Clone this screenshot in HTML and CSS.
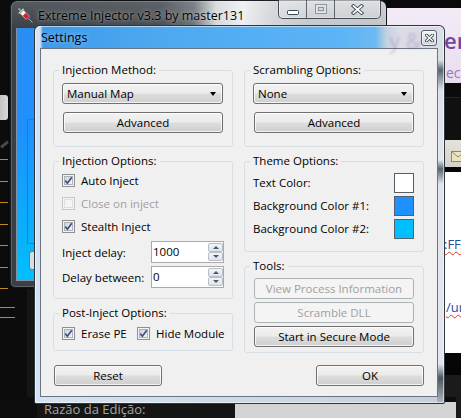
FILE: index.html
```html
<!DOCTYPE html>
<html>
<head>
<meta charset="utf-8">
<title>Extreme Injector - Settings</title>
<link rel="stylesheet" href="styles.css">
</head>
<body>
<div class="desktop">

  <div class="left-deco">
    <div class="l-box"></div>
    <div class="l-pencil"></div>
    <div class="l-lines">
      <i></i><i></i><i></i><i></i><i></i><i></i><i></i>
    </div>
    <div class="l-lines2"><i></i><i></i></div>
    <div class="l-col"></div>
  </div>

  <div class="web">
    <div class="w-top"></div>
    <div class="w-head">
      <div class="h1">er</div>
      <div class="h2">ect</div>
    </div>
    <div class="w-dark"></div>
    <div class="w-bar">
      <svg class="env" width="12" height="11" viewBox="0 0 12 11"><rect x="0.5" y="0.5" width="14" height="10" fill="#e9e5c4" stroke="#8f8a62"/><path d="M0.5 0.5 L7 6 L14 0.5" fill="none" stroke="#8f8a62"/></svg>
    </div>
    <div class="w-sep"></div>
    <div class="w-white">
      <div class="w-line l1">:FF(</div>
      <div class="w-line l2">/ur</div>
    </div>
    <div class="w-black"></div>
    <div class="w-grey"></div>
  </div>

  <div class="bottom-strip">
    <div class="bs-left"></div>
    <div class="bs-panel">Razão da Edição:</div>
    <div class="bs-light"></div>
    <div class="bs-right"></div>
  </div>

  <div class="mainwin">
    <div class="mw-title">
      <svg class="mw-icon" width="17" height="17" viewBox="0 0 17 17">
        <g transform="rotate(-45 8.5 8.5)">
          <rect x="7.6" y="-1.5" width="1.8" height="3.5" fill="#9a9a9a"/>
          <rect x="5" y="1.6" width="7" height="1.6" rx="0.5" fill="#d8d8d8" stroke="#6a6a6a" stroke-width="0.5"/>
          <rect x="6" y="3.2" width="5" height="8.8" fill="#ffffff" stroke="#6b6b6b" stroke-width="0.6"/>
          <rect x="6.4" y="6.8" width="4.2" height="5" fill="#d32222"/>
          <rect x="7.2" y="12" width="2.6" height="2" fill="#3f6fc4"/>
          <line x1="8.5" y1="14" x2="8.5" y2="18.5" stroke="#b9b9b9" stroke-width="0.9"/>
        </g>
      </svg>
      <span class="mw-text">Extreme Injector v3.3 by master131</span>
      <div class="caps">
        <div class="cap cap-min"><svg width="12" height="5" viewBox="0 0 12 5"><rect x="0.5" y="0.5" width="11" height="4" rx="1" fill="#fff" stroke="#3b4550"/></svg></div>
        <div class="cap cap-max"><svg width="12" height="10" viewBox="0 0 12 10"><rect x="0.5" y="0.5" width="11" height="9" fill="none" stroke="#8d959d"/><rect x="1.5" y="1.5" width="9" height="7" fill="none" stroke="#e6e9ec"/><rect x="3.5" y="3.5" width="5" height="3" fill="none" stroke="#8d959d"/></svg></div>
        <div class="cap cap-close"><svg width="13" height="11" viewBox="0 0 13 11"><path d="M2.5 2 L10.5 9 M10.5 2 L2.5 9" stroke="#3b4550" stroke-width="3.6" stroke-linecap="square"/><path d="M2.5 2 L10.5 9 M10.5 2 L2.5 9" stroke="#ffffff" stroke-width="1.8" stroke-linecap="square"/></svg></div>
      </div>
    </div>
    <div class="mw-body">
      <div class="mw-client">
        <div class="mw-group"></div>
        <div class="mw-ctrl"></div>
      </div>
    </div>
  </div>

  <div class="dialog">
    <div class="dlg-title">
      <span class="dlg-text">Settings</span>
      <span class="dlg-ghost">y &amp;</span>
      <span class="dlg-close"><svg width="9" height="8" viewBox="0 0 9 8"><path d="M1.5 1.2 L7.5 6.8 M7.5 1.2 L1.5 6.8" stroke="#3b4550" stroke-width="3" stroke-linecap="square"/><path d="M1.5 1.2 L7.5 6.8 M7.5 1.2 L1.5 6.8" stroke="#ffffff" stroke-width="1.3" stroke-linecap="square"/></svg></span>
    </div>

    <div class="client">
      <div class="col">
        <fieldset class="grp g-method">
          <legend>Injection Method:</legend>
          <div class="combo"><span>Manual Map</span><i class="arrow"></i></div>
          <div class="btn">Advanced</div>
        </fieldset>

        <fieldset class="grp g-opts">
          <legend>Injection Options:</legend>
          <div class="chk">
            <span class="box"><svg width="9" height="9" viewBox="0 0 9 9"><path d="M1.3 4.6 L3.4 7.2 L7.8 1.2" fill="none" stroke="#3d4f8a" stroke-width="1.7"/></svg></span>
            <span>Auto Inject</span>
          </div>
          <div class="chk off">
            <span class="box"></span>
            <span>Close on inject</span>
          </div>
          <div class="chk">
            <span class="box"><svg width="9" height="9" viewBox="0 0 9 9"><path d="M1.3 4.6 L3.4 7.2 L7.8 1.2" fill="none" stroke="#3d4f8a" stroke-width="1.7"/></svg></span>
            <span>Stealth Inject</span>
          </div>
          <div class="spin-row">
            <span>Inject delay:</span>
            <div class="spin"><span class="val">1000</span><div class="arrows"><b class="up"><i></i></b><b class="down"><i></i></b></div></div>
          </div>
          <div class="spin-row">
            <span>Delay between:</span>
            <div class="spin"><span class="val">0</span><div class="arrows"><b class="up"><i></i></b><b class="down"><i></i></b></div></div>
          </div>
        </fieldset>

        <fieldset class="grp g-post">
          <legend>Post-Inject Options:</legend>
          <div class="chk-pair">
            <div class="chk">
              <span class="box"><svg width="9" height="9" viewBox="0 0 9 9"><path d="M1.3 4.6 L3.4 7.2 L7.8 1.2" fill="none" stroke="#3d4f8a" stroke-width="1.7"/></svg></span>
              <span>Erase PE</span>
            </div>
            <div class="chk">
              <span class="box"><svg width="9" height="9" viewBox="0 0 9 9"><path d="M1.3 4.6 L3.4 7.2 L7.8 1.2" fill="none" stroke="#3d4f8a" stroke-width="1.7"/></svg></span>
              <span>Hide Module</span>
            </div>
          </div>
        </fieldset>
      </div>

      <div class="col">
        <fieldset class="grp g-method">
          <legend>Scrambling Options:</legend>
          <div class="combo"><span>None</span><i class="arrow"></i></div>
          <div class="btn">Advanced</div>
        </fieldset>

        <fieldset class="grp g-theme">
          <legend>Theme Options:</legend>
          <div class="theme-row"><span>Text Color:</span><i class="swatch sw-white"></i></div>
          <div class="theme-row"><span>Background Color #1:</span><i class="swatch sw-blue1"></i></div>
          <div class="theme-row"><span>Background Color #2:</span><i class="swatch sw-blue2"></i></div>
        </fieldset>

        <fieldset class="grp g-tools">
          <legend>Tools:</legend>
          <div class="btn disabled">View Process Information</div>
          <div class="btn disabled">Scramble DLL</div>
          <div class="btn">Start in Secure Mode</div>
        </fieldset>
      </div>

      <div class="actions">
        <div class="btn wide">Reset</div>
        <div class="btn wide">OK</div>
      </div>
    </div>
  </div>

</div>
</body>
</html>
```

FILE: styles.css
```css
* { box-sizing: border-box; }
html, body { margin: 0; padding: 0; }
body {
  width: 461px;
  height: 418px;
  overflow: hidden;
  background: #0c0c0c;
  font-family: "Open Sans", "Noto Sans", sans-serif;
  font-size: 11.5px;
  color: #000;
}
.desktop { position: relative; width: 461px; height: 418px; overflow: hidden; }

/* ---------- left background decorations ---------- */
.left-deco { position: absolute; left: 0; top: 0; width: 40px; height: 418px; }
.l-box { position: absolute; left: 0; top: 95px; width: 8px; height: 25px; background: linear-gradient(90deg, #c4c4c4, #d8d8d8); border-radius: 0 3px 3px 0; }
.l-pencil { position: absolute; left: 0; top: 143px; width: 9px; height: 3px; background: #4a4a4a; transform: rotate(-40deg); }
.l-lines { position: absolute; left: 0; top: 159px; display: flex; flex-direction: column; gap: 20.5px; }
.l-lines i { display: block; width: 8px; height: 1px; background: #c08a12; }
.l-lines2 { position: absolute; left: 0; top: 307px; display: flex; flex-direction: column; gap: 9px; }
.l-lines2 i { display: block; width: 15px; height: 1px; background: #c08a12; }
.l-col { position: absolute; left: 27px; top: 289px; width: 8px; height: 110px; background: #151515; }

/* ---------- right web page in the background ---------- */
.web {
  position: absolute; left: 386px; top: 0; width: 75px; height: 397px;
  display: flex; flex-direction: column; background: #0e0e0e;
  overflow: hidden;
}
.w-top { height: 8px; background: #0a0a0a; }
.w-head {
  height: 75px;
  background: linear-gradient(#f3ecf7, #e8ddef);
  padding-left: 58px;
  white-space: nowrap;
  overflow: hidden;
}
.h1 { font-size: 22px; font-weight: 600; color: #774499; line-height: 26px; margin-top: 19px; }
.h2 { font-size: 14px; color: #9a7ab3; line-height: 16px; margin-top: 12px; margin-left: 2px; }
.w-dark { height: 57px; background: #101010; border-top: 14px solid #0b0b0b; box-shadow: inset 0 1px 0 #262626; }
.w-bar { height: 27px; background: linear-gradient(#e3e3dc, #d3d3cb); padding: 11px 0 0 65px; }
.env { display: block; }
.w-sep { height: 5px; background: #050505; }
.w-white { height: 181px; background: #fff; padding: 64px 0 0 58px; font-size: 13px; color: #2c4a9a; white-space: nowrap; overflow: hidden; }
.w-line { line-height: 17px; text-decoration: underline wavy #e03030; text-decoration-thickness: 1px; text-underline-offset: 2px; }
.w-line.l2 { margin-top: 46px; margin-left: 2px; }
.w-black { height: 22px; background: #060606; }
.w-grey { flex: 1; background: #1b1b1b; }

/* ---------- bottom strip ---------- */
.bottom-strip { position: absolute; left: 0; top: 397px; width: 461px; height: 21px; display: flex; }
.bs-left { width: 37px; background: #0d0d0d; }
.bs-panel { width: 198px; background: #151515; color: #a6a6a6; font-size: 13px; padding: 4px 0 0 7px; line-height: 16px; white-space: nowrap; }
.bs-light { width: 221px; margin-top: 5px; background: #d4d4d4; }
.bs-right { flex: 1; background: #1a1a1a; }

/* ---------- main (background) window ---------- */
.mainwin {
  position: absolute; left: 10px; top: 0; width: 377px; height: 288px;
  border: 1px solid rgba(10, 12, 16, 0.9);
  border-radius: 7px 7px 5px 5px;
  background:
    linear-gradient(180deg, rgba(255,255,255,0.14), rgba(255,255,255,0) 28px),
    linear-gradient(90deg, #393f45 0px, #444a50 150px, #6a7075 183px, #d5d9dc 205px, #eceef0 232px, #d1d5d8 262px, #c5c9cd 300px, #c2c6ca 376px);
  display: flex; flex-direction: column;
  box-shadow: inset 0 0 0 1px rgba(255,255,255,0.18);
}
.mw-title { height: 27px; display: flex; align-items: flex-start; padding: 6px 0 0 6px; position: relative; }
.mw-icon { flex: none; }
.mw-text {
  margin-left: 4px; margin-top: 1px; font-size: 12.5px; line-height: 16px; color: #000;
  text-shadow: 0 0 6px rgba(255,255,255,0.55), 0 0 2px rgba(255,255,255,0.35);
  white-space: nowrap;
}
.caps {
  position: absolute; right: 5px; top: -1px; height: 19px;
  display: flex;
  border: 1px solid rgba(45, 52, 60, 0.85); border-top: none;
  border-radius: 0 0 5px 5px;
  overflow: hidden;
  box-shadow: inset 0 0 0 1px rgba(255,255,255,0.35);
}
.cap { display: flex; align-items: center; justify-content: center; background: linear-gradient(rgba(255,255,255,0.35), rgba(255,255,255,0.12)); }
.cap + .cap { border-left: 1px solid rgba(45, 52, 60, 0.7); }
.cap-min { width: 27px; padding-top: 6px; }
.cap-max { width: 28px; }
.cap-close { width: 46px; }

.mw-body { flex: 1; display: flex; padding: 0 0 6px 5px; }
.mw-client {
  flex: 1; position: relative;
  background: linear-gradient(180deg, #2b8df2 0%, #1e90ff 40%, #08b2fc 85%, #00bfff 100%);
  border-left: 1px solid #8393a3;
  border-bottom: 1px solid #8393a3;
}
.mw-group { position: absolute; left: 10px; top: 91px; width: 40px; height: 125px; border: 1px solid #5a6e86; }
.mw-ctrl { position: absolute; left: 12px; top: 223px; width: 30px; height: 19px; border: 1px solid #7a7a7a; border-radius: 3px; background: #dcdcdc; }

/* ---------- settings dialog ---------- */
.dialog {
  position: absolute; left: 34px; top: 25px; width: 411px; height: 379px;
  border: 1px solid rgba(30, 36, 44, 0.9);
  border-radius: 6px 6px 2px 2px;
  padding: 0 6px 6px 5px;
  display: flex; flex-direction: column;
  background:
    linear-gradient(180deg, #d9dfe5 0, #d9dfe5 34px, #5b656f 44px, #dbe1e7 64px, #e1e7ec 134px, #59636c 143px, #dfe5ea 158px, #e1e7ec 338px, #4d555d 352px, #b4bcc4 378px) right top / 7px 100% no-repeat,
    linear-gradient(90deg, #d6e4f0 0, #d6e4f0 5px, #3e9aea 8px, #4ea8f0 120px, #5ab4f5 300px, #6bb9f2 340px, #c5d2e0 352px, #dcdbe7 365px, #d6d9e3 100%) left top / 100% 23px no-repeat,
    linear-gradient(90deg, #d3e3f3, #cbd8e5 60%, #c6cfd9);
  box-shadow: inset 0 0 0 1px rgba(255,255,255,0.55);
}
.dlg-title { height: 22px; flex: none; display: flex; align-items: center; position: relative; }
.dlg-text { margin-left: 1px; font-size: 12.5px; color: #000; text-shadow: 0 0 5px rgba(255,255,255,0.5); }
.dlg-ghost { position: absolute; left: 349px; top: 1px; font-size: 21px; font-weight: 600; color: rgba(130, 90, 160, 0.22); filter: blur(1.2px); white-space: nowrap; }
.dlg-close {
  position: absolute; right: 1px; top: 4px; width: 16px; height: 16px;
  border: 1px solid #56606c; border-radius: 3px;
  background: linear-gradient(#f2f4f6, #dde2e7 50%, #cdd3da);
  display: flex; align-items: center; justify-content: center;
  box-shadow: inset 0 0 0 1px rgba(255,255,255,0.6);
}

.client {
  flex: none;
  height: 349px;
  border: 1px solid #6a7480;
  background: #f0f0f0;
  padding: 14px 0 0 12px;
  display: grid;
  grid-template-columns: 180px 180px;
  grid-template-rows: auto auto;
  column-gap: 11px;
  align-content: start;
}
.col { display: flex; flex-direction: column; gap: 7px; }

.grp {
  margin: 0;
  border: 1px solid #d5dfe5;
  border-radius: 3px;
  padding: 6px 9px 13px 8px;
  min-width: 0;
}
.grp legend {
  padding: 0 3px;
  margin-left: -3px;
  line-height: 14px;
  font-size: 11.5px;
}
.g-method { padding-bottom: 13px; }
.g-opts { padding-top: 1px; padding-bottom: 10px; }
.g-post { padding-top: 2px; padding-bottom: 5px; }
.g-theme { padding-top: 3px; padding-bottom: 11px; }
.g-tools { padding-top: 5px; padding-bottom: 5px; display: flex; flex-direction: column; gap: 3px; }

/* buttons */
.btn {
  height: 21px;
  margin: 0 0 0 1px;
  border: 1px solid #707070;
  border-radius: 3px;
  background: linear-gradient(180deg, #f2f2f2 0%, #ebebeb 48%, #dddddd 52%, #cfcfcf 100%);
  box-shadow: inset 0 0 0 1px rgba(255,255,255,0.75);
  display: flex; align-items: center; justify-content: center;
  line-height: 14px;
  white-space: nowrap;
}
.g-method .btn { margin-top: 8px; width: 160px; }
.g-tools .btn { width: 160px; }
.btn.disabled {
  border-color: #adb2b5;
  background: #f4f4f4;
  color: #a0a0a0;
  box-shadow: none;
}

/* combobox */
.combo {
  height: 21px;
  border: 1px solid #707070;
  border-radius: 3px;
  background: linear-gradient(180deg, #f2f2f2 0%, #ebebeb 48%, #dddddd 52%, #cfcfcf 100%);
  box-shadow: inset 0 0 0 1px rgba(255,255,255,0.75);
  display: flex; align-items: center;
  padding: 0 5px 0 4px;
  line-height: 14px;
}
.combo span { flex: 1; }
.arrow { width: 0; height: 0; border-left: 3.5px solid transparent; border-right: 3.5px solid transparent; border-top: 4px solid #000; margin-right: 1px; }

/* checkboxes */
.chk { height: 23px; display: flex; align-items: center; gap: 6px; white-space: nowrap; }
.box {
  width: 13px; height: 13px; flex: none;
  border: 1px solid #8e8f8f;
  background: #f4f4f4;
  padding: 1px;
  display: flex; align-items: center; justify-content: center;
  position: relative;
}
.box::before {
  content: "";
  position: absolute; left: 1px; top: 1px; right: 1px; bottom: 1px;
  border: 1px solid #aeb3b9;
  background: linear-gradient(135deg, #cfd3d8, #f4f5f6);
}
.box svg { position: relative; }
.chk.off { color: #a0a0a0; }
.chk.off .box { border-color: #c6c6c6; background: #f6f6f6; }
.chk.off .box::before { border-color: #dedede; background: #f4f4f4; }
.chk-pair { display: grid; grid-template-columns: 75px auto; }

/* spin boxes */
.spin-row { display: grid; grid-template-columns: 89px 73px; align-items: center; margin-top: 3px; }
.spin {
  height: 22px;
  border: 1px solid #a9a9a9;
  background: #fff;
  display: flex;
}
.spin .val { flex: 1; padding-left: 1px; line-height: 20px; }
.arrows { width: 15px; display: flex; flex-direction: column; padding: 1px 0; }
.arrows b {
  flex: 1;
  border: 1px solid #b8bec6;
  border-radius: 2px;
  background: linear-gradient(#f3f4f6, #dfe3e8);
  display: flex; align-items: center; justify-content: center;
}
.arrows .up i { width: 0; height: 0; border-left: 3px solid transparent; border-right: 3px solid transparent; border-bottom: 3px solid #4a5a72; }
.arrows .down i { width: 0; height: 0; border-left: 3px solid transparent; border-right: 3px solid transparent; border-top: 3px solid #4a5a72; }

/* theme rows */
.theme-row { height: 23px; display: flex; align-items: center; justify-content: space-between; white-space: nowrap; }
.swatch { width: 20px; height: 20px; border: 1px solid #56606a; display: block; }
.sw-white { background: #ffffff; }
.sw-blue1 { background: #1e90ff; }
.sw-blue2 { background: #00bfff; }

/* bottom buttons */
.actions {
  grid-column: 1 / 3;
  display: flex; justify-content: space-between;
  margin-top: 12px;
}
.btn.wide { width: 108px; }
```
